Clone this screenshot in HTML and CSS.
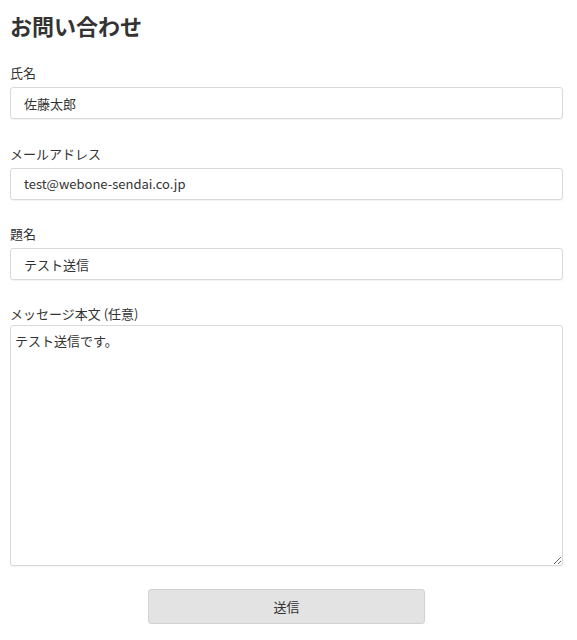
FILE: index.html
```html
<!DOCTYPE html>
<html lang="ja">
<head>
    <meta charset="UTF-8">
    <meta name="viewport" content="width=device-width, initial-scale=1.0">
    <title>お問い合わせ</title>
    <link rel="stylesheet" href="styles.css">
</head>
<body>
    <!-- Contact Form -->
    <div class="container">
        <h1>お問い合わせ</h1>
        <form id="contact-form">
            <div class="field">
                <label for="name">氏名</label>
                <input type="text" id="name" value="佐藤太郎">
            </div>
            <div class="field">
                <label for="email">メールアドレス</label>
                <input type="email" id="email" value="test@webone-sendai.co.jp">
            </div>
            <div class="field">
                <label for="subject">題名</label>
                <input type="text" id="subject" value="テスト送信">
            </div>
            <div class="field field-message">
                <label for="message">メッセージ本文 (任意)</label>
                <textarea id="message">テスト送信です。</textarea>
            </div>
            <div class="actions">
                <button type="submit">送信</button>
            </div>
        </form>
    </div>
</body>
</html>
```

FILE: styles.css
```css
body {
    font-family: "Noto Sans CJK JP", "Noto Sans", sans-serif;
    color: #333;
    margin: 0;
    padding: 0;
    background-color: #ffffff;
}
.container {
    padding: 10px 14px 0 10px;
}
h1 {
    font-size: 22px;
    line-height: 30px;
    font-weight: bold;
    margin: 0 0 24px;
    color: #333;
}
.field {
    margin-bottom: 25.5px;
}
label {
    display: block;
    font-size: 13px;
    line-height: 18px;
    margin-bottom: 5px;
}
input, textarea {
    display: block;
    box-sizing: border-box;
    width: 100%;
    border: 1px solid #d9d9d9;
    border-radius: 3px;
    box-shadow: 0 1px 1px rgba(0, 0, 0, 0.05);
    font-family: inherit;
    font-size: 13px;
    color: #333;
    margin: 0;
}
input {
    height: 32px;
    padding: 0 13px;
}
.field-message {
    margin-top: -0.5px;
    margin-bottom: 23px;
}
.field-message label {
    margin-bottom: 2px;
}
textarea {
    height: 241px;
    padding: 6px 4px;
    line-height: 18px;
    resize: vertical;
}
.actions {
    text-align: center;
}
button {
    width: 277px;
    height: 35px;
    background-color: #e3e3e3;
    border: 1px solid #d2d2d2;
    border-radius: 3px;
    font-family: inherit;
    font-size: 13px;
    color: #333;
    cursor: pointer;
}
```
